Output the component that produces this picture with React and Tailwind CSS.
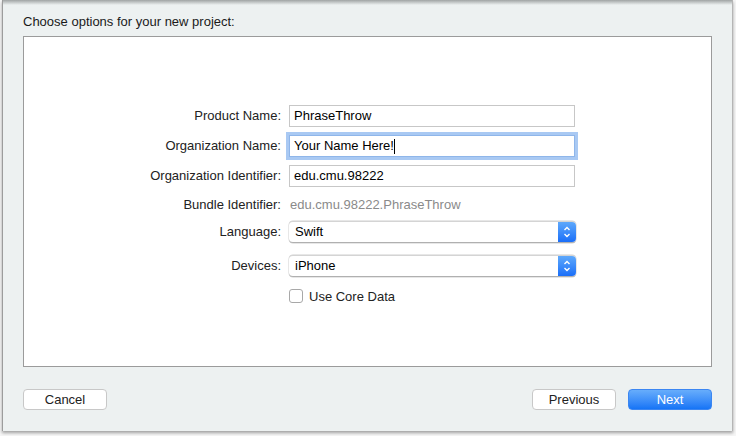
import React, { useState } from "react";

function Field({ label, children }) {
  return (
    <div className="flex items-center">
      <div className="w-[265px] pr-[8px] text-right text-[13px] text-[#222]">{label}</div>
      {children}
    </div>
  );
}

function TextInput({ value, focused }) {
  return (
    <div
      className={`w-[286px] h-[22px] flex items-center px-[4px] bg-white text-[13px] text-black border ${
        focused
          ? "border-[#8fb6ea] shadow-[0_0_0_3px_#a9c9f3]"
          : "border-[#c7c7c7]"
      }`}
    >
      {value}
      {focused && <span className="w-[1px] h-[15px] bg-black" />}
    </div>
  );
}

function Popup({ value }) {
  return (
    <div className="w-[287px] h-[22px] flex items-stretch bg-white rounded-[4px] border-t border-[#d4d4d4] border-b border-b-[#b0b0b0] shadow-[0_0_0_0.5px_#d0d0d0]">
      <div className="flex-1 flex items-center pl-[6px] text-[13px] text-black">{value}</div>
      <div className="w-[18px] rounded-r-[4px] bg-gradient-to-b from-[#5ea8fb] to-[#1a6ef8] flex items-center justify-center">
        <svg width="8" height="14" viewBox="0 0 8 14" fill="none" stroke="white" strokeWidth="1.4">
          <path d="M1.5 5 L4 2.5 L6.5 5" />
          <path d="M1.5 9 L4 11.5 L6.5 9" />
        </svg>
      </div>
    </div>
  );
}

export default function App() {
  const [coreData, setCoreData] = useState(false);

  return (
    <div
      className="w-[736px] h-[436px] bg-[#f6f6f6] overflow-hidden"
      style={{ fontFamily: '"Liberation Sans", Arial, sans-serif' }}
    >
      <div className="ml-[2px] w-[731px] h-[431px] bg-[#edf1f1] border-l border-[#9c9c9c] border-r border-r-[#b5b5b5] shadow-[0_2px_3px_rgba(0,0,0,0.35)] relative flex flex-col">
        {/* top shadow from the window above */}
        <div className="absolute top-0 left-0 right-0 h-[5px] bg-gradient-to-b from-[#a0a4a4] to-transparent" />

        <div className="pl-[20px] pt-[12px] h-[36px] text-[13px] text-[#1a1a1a]">
          Choose options for your new project:
        </div>

        <div className="mx-[20px] h-[331px] bg-white border border-[#9b9b9b] flex flex-col pt-[68px] gap-[8px]">
          <Field label="Product Name:">
            <TextInput value="PhraseThrow" />
          </Field>
          <Field label="Organization Name:">
            <TextInput value="Your Name Here!" focused />
          </Field>
          <Field label="Organization Identifier:">
            <TextInput value="edu.cmu.98222" />
          </Field>
          <Field label="Bundle Identifier:">
            <div className="pl-[1px] text-[13px] text-[#8a8a8a] h-[18px] flex items-center">
              edu.cmu.98222.PhraseThrow
            </div>
          </Field>
          <div className="mt-[-2px]">
            <Field label="Language:">
              <Popup value="Swift" />
            </Field>
          </div>
          <div className="mt-[4px]">
            <Field label="Devices:">
              <Popup value="iPhone" />
            </Field>
          </div>
          <div className="flex items-center pl-[265px] mt-[2px]">
            <button
              onClick={() => setCoreData(!coreData)}
              className="w-[14px] h-[14px] rounded-[3px] border border-[#a8a8a8] bg-white"
            />
            <span className="ml-[6px] text-[13px] text-[#222]">Use Core Data</span>
          </div>
        </div>

        <div className="flex items-center px-[20px] pt-[22px]">
          <button className="w-[84px] h-[21px] bg-white rounded-[4px] border border-[#c8c8c8] text-[13px] text-[#222]">
            Cancel
          </button>
          <div className="flex-1" />
          <button className="w-[84px] h-[21px] bg-white rounded-[4px] border border-[#c8c8c8] text-[13px] text-[#222]">
            Previous
          </button>
          <button className="ml-[12px] w-[84px] h-[21px] rounded-[4px] bg-gradient-to-b from-[#67adfb] to-[#1474f6] border border-[#3b86f2] text-[13px] text-white">
            Next
          </button>
        </div>
      </div>
    </div>
  );
}
